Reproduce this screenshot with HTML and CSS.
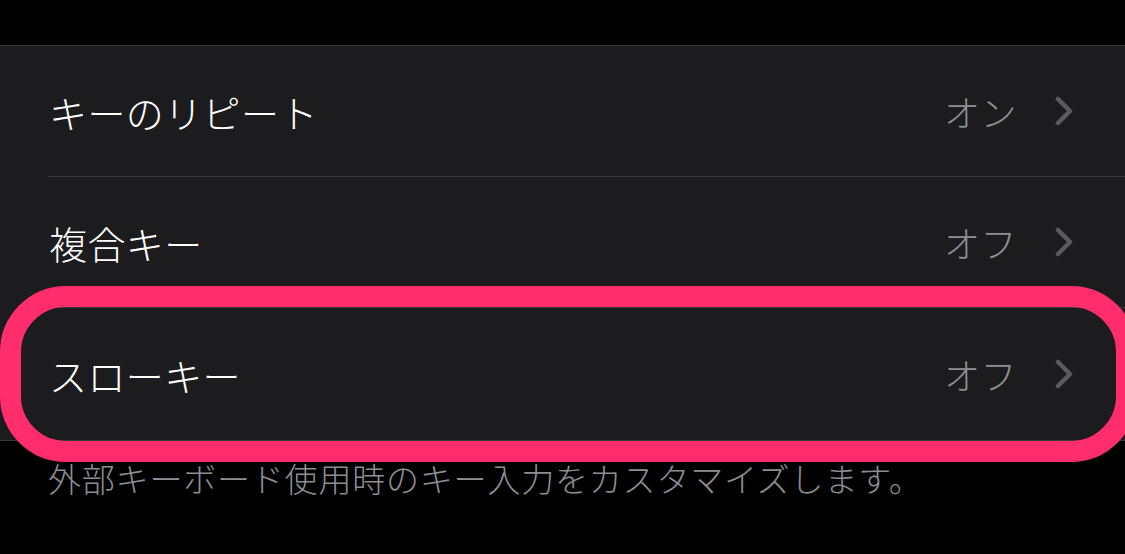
FILE: index.html
```html
<!DOCTYPE html>
<html lang="ja">
<head>
  <meta charset="UTF-8">
  <title>キーボード</title>
  <link rel="stylesheet" href="styles.css">
</head>
<body>

<div class="group">
  <div class="row">
    <div class="row-inner">
      <span class="label">キーのリピート</span>
      <span class="value">オン</span>
      <svg class="chevron" width="18" height="30" viewBox="0 0 18 30"><path d="M3 3 L15 15 L3 27" fill="none" stroke="#5a5a5f" stroke-width="4.5" stroke-linecap="round" stroke-linejoin="round"/></svg>
    </div>
  </div>
  <div class="row">
    <div class="row-inner">
      <span class="label">複合キー</span>
      <span class="value">オフ</span>
      <svg class="chevron" width="18" height="30" viewBox="0 0 18 30"><path d="M3 3 L15 15 L3 27" fill="none" stroke="#5a5a5f" stroke-width="4.5" stroke-linecap="round" stroke-linejoin="round"/></svg>
    </div>
  </div>
  <div class="row last">
    <div class="row-inner">
      <span class="label">スローキー</span>
      <span class="value">オフ</span>
      <svg class="chevron" width="18" height="30" viewBox="0 0 18 30"><path d="M3 3 L15 15 L3 27" fill="none" stroke="#5a5a5f" stroke-width="4.5" stroke-linecap="round" stroke-linejoin="round"/></svg>
    </div>
    <div class="highlight"></div>
  </div>
</div>

<p class="footer">外部キーボード使用時のキー入力をカスタマイズします。</p>

</body>
</html>
```

FILE: styles.css
```css
html, body {
  margin: 0;
  padding: 0;
}
body {
  background: #000;
  font-family: "Noto Sans CJK JP", "Noto Sans", sans-serif;
  font-weight: 300;
  width: 1125px;
  height: 554px;
  overflow: hidden;
}
.group {
  margin-top: 45px;
  background: #1c1c1e;
  border-top: 1px solid #38383a;
  border-bottom: 1px solid #38383a;
}
.row {
  position: relative;
  padding-left: 48px;
}
.row-inner {
  display: flex;
  align-items: center;
  height: 130px;
  padding-right: 52px;
  border-bottom: 1px solid #38383a;
}
.row.last .row-inner {
  border-bottom: none;
  height: 132px;
}
.label {
  flex: 1;
  color: #fff;
  font-size: 38px;
  letter-spacing: 0.4px;
  padding-left: 1px;
}
.value {
  color: #8e8e93;
  font-size: 36px;
  letter-spacing: 0.5px;
  margin-right: 38px;
}
.chevron {
  display: block;
}
.highlight {
  position: absolute;
  top: -22px;
  left: 0;
  right: -12px;
  bottom: -22px;
  border: 21px solid #ff2d6b;
  border-radius: 66px;
  pointer-events: none;
}
.footer {
  margin: 17px 0 0 48px;
  color: #8d8d92;
  font-size: 33px;
  letter-spacing: 0.8px;
  line-height: 40px;
}
```
